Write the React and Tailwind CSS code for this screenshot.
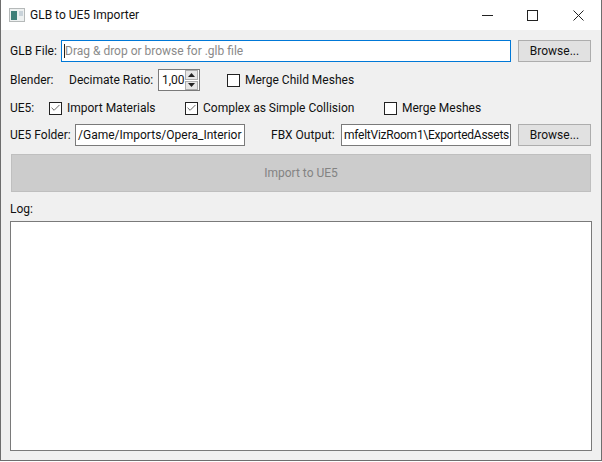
import React from 'react';
import { Check } from 'lucide-react';

const Browse = () => (
  <button className="w-[73px] h-[22px] shrink-0 bg-[#e1e1e1] border border-[#adadad] text-[#111]">
    Browse...
  </button>
);

const CheckBox = ({ label, checked, className }) => (
  <label className={`flex items-center gap-[5px] text-[#111] ${className}`}>
    <span className="w-[13px] h-[13px] flex items-center justify-center bg-white border border-[#222]">
      {checked && <Check size={12} strokeWidth={1.5} color="#222" />}
    </span>
    {label}
  </label>
);

const TextBox = ({ value, className }) => (
  <div className={`h-[22px] bg-white border border-[#7a7a7a] flex items-center px-[2px] overflow-hidden whitespace-nowrap text-[#111] ${className}`}>
    {value}
  </div>
);

export default function App() {
  return (
    <div className="w-[602px] h-[462px] bg-white overflow-hidden font-['Roboto',sans-serif] text-[12px]">
      <div className="w-[602px] h-[461px] flex flex-col border border-t-0 border-[#6e6e6e] bg-[#f0f0f0]">
        {/* title bar */}
        <div className="h-[30px] shrink-0 bg-white flex items-center">
          <svg width="16" height="14" viewBox="0 0 16 14" className="ml-[8px]">
            <rect x="0.5" y="0.5" width="15" height="13" fill="#eef1f1" stroke="#b5b9b9" />
            <rect x="2" y="3" width="6" height="9" fill="#3f7f78" />
            <rect x="10" y="3" width="4" height="5" fill="#c9d3da" />
          </svg>
          <span className="ml-[5px] text-[#111]">GLB to UE5 Importer</span>
          <div className="ml-auto flex items-center">
            <svg width="11" height="11" viewBox="0 0 11 11" className="mr-[34px]">
              <path d="M0 5.5H11" stroke="#222" />
            </svg>
            <svg width="11" height="11" viewBox="0 0 11 11" className="mr-[35px]">
              <rect x="0.5" y="0.5" width="10" height="10" fill="none" stroke="#222" />
            </svg>
            <svg width="11" height="11" viewBox="0 0 11 11" className="mr-[17px]">
              <path d="M0.5 0.5L10.5 10.5M10.5 0.5L0.5 10.5" stroke="#222" />
            </svg>
          </div>
        </div>

        <div className="flex-1 flex flex-col pt-[10px] px-[9px] text-[#111]">
          <div className="h-[22px] flex items-center">
            <span className="w-[51px]">GLB File:</span>
            <div className="w-[450px] h-[22px] bg-white border border-[#0078d7] flex items-center text-[#8a8a8a]">
              <span className="w-px h-[14px] bg-[#222] ml-[2px]" />
              Drag &amp; drop or browse for .glb file
            </div>
            <div className="ml-[7px]"><Browse /></div>
          </div>

          <div className="h-[22px] mt-[7px] flex items-center">
            <span className="w-[59px]">Blender:</span>
            <span className="w-[89px]">Decimate Ratio:</span>
            <div className="w-[42px] h-[22px] bg-white border border-[#7a7a7a] flex items-center pl-[3px]">
              <span className="flex-1">1,00</span>
              <div className="w-[15px] h-[20px] flex flex-col gap-px pr-px">
                <div className="flex-1 bg-[#e6e6e6] border border-[#adadad] flex items-center justify-center">
                  <svg width="7" height="4" viewBox="0 0 7 4"><path d="M3.5 0L7 4H0Z" fill="#222" /></svg>
                </div>
                <div className="flex-1 bg-[#e6e6e6] border border-[#adadad] flex items-center justify-center">
                  <svg width="7" height="4" viewBox="0 0 7 4"><path d="M0 0H7L3.5 4Z" fill="#222" /></svg>
                </div>
              </div>
            </div>
            <CheckBox label="Merge Child Meshes" className="ml-[27px]" />
          </div>

          <div className="h-[18px] mt-[8px] flex items-center">
            <span className="w-[39px]">UE5:</span>
            <CheckBox label="Import Materials" checked className="w-[136px]" />
            <CheckBox label="Complex as Simple Collision" checked className="w-[199px]" />
            <CheckBox label="Merge Meshes" />
          </div>

          <div className="h-[22px] mt-[7px] flex items-center">
            <span className="w-[65px]">UE5 Folder:</span>
            <TextBox value="/Game/Imports/Opera_Interior" className="w-[170px]" />
            <span className="ml-[26px] w-[70px]">FBX Output:</span>
            <TextBox value="mfeltVizRoom1\ExportedAssets" className="w-[170px] tracking-[-0.25px]" />
            <div className="ml-[7px]"><Browse /></div>
          </div>

          <button className="w-[580px] h-[38px] mt-[8px] ml-px bg-[#cccccc] border border-[#bfbfbf] text-[#838383]">
            Import to UE5
          </button>

          <div className="mt-[6px] h-[21px] mb-[2px] flex items-center">Log:</div>
          <div className="w-[582px] h-[230px] bg-white border border-[#7a7a7a]" />
        </div>
      </div>
    </div>
  );
}
